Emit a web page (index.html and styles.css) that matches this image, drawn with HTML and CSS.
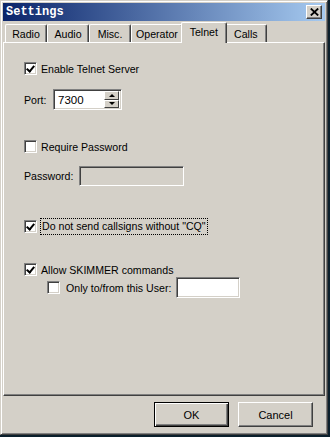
FILE: index.html
```html
<!DOCTYPE html>
<html lang="en">
<head>
    <meta charset="UTF-8">
    <title>Settings</title>
    <link rel="stylesheet" href="styles.css">
</head>
<body>
    <div class="window">
        <div class="titlebar">
            <span class="title">Settings</span>
            <div class="close-btn">
                <svg width="9" height="8" viewBox="0 0 9 8"><path d="M0.8 0.5 L8.2 7.5 M8.2 0.5 L0.8 7.5" stroke="#000" stroke-width="1.8"/></svg>
            </div>
        </div>

        <div class="tabs">
            <div class="tab">Radio</div>
            <div class="tab">Audio</div>
            <div class="tab">Misc.</div>
            <div class="tab">Operator</div>
            <div class="tab active">Telnet</div>
            <div class="tab">Calls</div>
        </div>

        <div class="panel">
            <div class="check-row row-enable">
                <span class="checkbox checked"></span>
                <span class="check-label">Enable Telnet Server</span>
            </div>

            <div class="field-row row-port">
                <span class="field-label port-label">Port:</span>
                <div class="spinner">
                    <span class="spinner-value">7300</span>
                    <div class="spin-buttons">
                        <div class="spin-btn"><span class="arrow-up"></span></div>
                        <div class="spin-btn"><span class="arrow-down"></span></div>
                    </div>
                </div>
            </div>

            <div class="check-row row-require">
                <span class="checkbox"></span>
                <span class="check-label">Require Password</span>
            </div>

            <div class="field-row row-password">
                <span class="field-label pass-label">Password:</span>
                <div class="textbox disabled pass-box"></div>
            </div>

            <div class="check-row row-cq">
                <span class="checkbox checked"></span>
                <span class="check-label focused">Do not send callsigns without "CQ"</span>
            </div>

            <div class="check-row row-skimmer">
                <span class="checkbox checked"></span>
                <span class="check-label">Allow SKIMMER commands</span>
            </div>

            <div class="field-row row-user">
                <span class="checkbox"></span>
                <span class="check-label user-label">Only to/from this User:</span>
                <div class="textbox user-box"></div>
            </div>
        </div>

        <div class="footer">
            <button class="btn default">OK</button>
            <button class="btn">Cancel</button>
        </div>
    </div>
</body>
</html>
```

FILE: styles.css
```css
body {
    margin: 0;
    padding: 0;
    background: #0b1f2c;
    font-family: 'Liberation Sans', Arial, sans-serif;
    font-size: 10.6px;
    color: #000;
}
.window {
    width: 328px;
    height: 435px;
    box-sizing: border-box;
    background: #d4d0c8;
    border-top: 1px solid #d4d0c8;
    border-left: 1px solid #d4d0c8;
    border-right: 1px solid #404040;
    border-bottom: 1px solid #404040;
    box-shadow: inset 1px 1px 0 #fff, inset -1px -1px 0 #808080;
    padding: 2px;
    display: flex;
    flex-direction: column;
}
.titlebar {
    height: 18px;
    background: linear-gradient(to right, #0a246a, #a6caf0);
    display: flex;
    justify-content: space-between;
    align-items: center;
    padding: 0 3px 0 3px;
}
.title {
    color: #fff;
    font-family: 'Liberation Mono', 'Courier New', monospace;
    font-weight: bold;
    font-size: 12px;
}
.close-btn {
    width: 16px;
    height: 14px;
    box-sizing: border-box;
    background: #d4d0c8;
    border-top: 1px solid #fff;
    border-left: 1px solid #fff;
    border-right: 1px solid #404040;
    border-bottom: 1px solid #404040;
    box-shadow: inset -1px -1px 0 #808080;
    display: flex;
    justify-content: center;
    align-items: center;
}
.tabs {
    display: flex;
    align-items: flex-end;
    height: 19px;
    margin-top: 2px;
    padding-left: 2px;
    position: relative;
    z-index: 1;
}
.tab {
    height: 18px;
    min-width: 42px;
    box-sizing: border-box;
    padding: 0 4px;
    display: flex;
    justify-content: center;
    align-items: center;
    background: #d4d0c8;
    border-top: 1px solid #fff;
    border-left: 1px solid #fff;
    border-right: 1px solid #404040;
    border-radius: 2px 2px 0 0;
    box-shadow: inset -1px 0 0 #808080;
}
.tab.active {
    height: 21px;
    margin: 0 -2px -1px -2px;
    min-width: 46px;
    padding-bottom: 2px;
    position: relative;
    z-index: 2;
}
.panel {
    height: 354px;
    box-sizing: border-box;
    border-top: 1px solid #fff;
    border-left: 1px solid #fff;
    border-right: 1px solid #404040;
    border-bottom: 1px solid #404040;
    box-shadow: inset -1px -1px 0 #808080;
    padding-left: 20px;
    display: flex;
    flex-direction: column;
}
.check-row, .field-row {
    display: flex;
    align-items: center;
}
.check-row {
    height: 13px;
}
.row-enable { margin-top: 19px; }
.row-port { margin-top: 14px; height: 21px; }
.row-require { margin-top: 30px; }
.row-password { margin-top: 13px; height: 20px; }
.row-cq { margin-top: 34px; }
.row-skimmer { margin-top: 30px; }
.row-user { margin-top: 1px; height: 21px; padding-left: 23px; }

.checkbox {
    width: 13px;
    height: 13px;
    box-sizing: border-box;
    background: #fff;
    border-top: 1px solid #808080;
    border-left: 1px solid #808080;
    border-right: 1px solid #fff;
    border-bottom: 1px solid #fff;
    box-shadow: inset 1px 1px 0 #404040, inset -1px -1px 0 #d4d0c8;
    flex-shrink: 0;
    position: relative;
}
.checkbox.checked::after {
    content: "";
    position: absolute;
    left: 3px;
    top: 1px;
    width: 3px;
    height: 6px;
    border-right: 2px solid #000;
    border-bottom: 2px solid #000;
    transform: rotate(40deg);
}
.check-label {
    margin-left: 4px;
    white-space: nowrap;
}
.check-label.focused {
    margin-left: 3px;
    padding: 1px 1px 2px 1px;
    border: 1px dotted #000;
}
.user-label {
    margin-left: 6px;
}
.field-label {
    white-space: nowrap;
}
.port-label { width: 29px; }
.pass-label { width: 55px; }

.spinner, .textbox {
    box-sizing: border-box;
    border-top: 1px solid #808080;
    border-left: 1px solid #808080;
    border-right: 1px solid #fff;
    border-bottom: 1px solid #fff;
    box-shadow: inset 1px 1px 0 #404040, inset -1px -1px 0 #d4d0c8;
    background: #fff;
}
.spinner {
    width: 69px;
    height: 21px;
    display: flex;
    align-items: center;
    justify-content: space-between;
    padding: 2px;
}
.spinner-value {
    padding-left: 2px;
    font-size: 11.5px;
}
.spin-buttons {
    display: flex;
    flex-direction: column;
    width: 15px;
    height: 17px;
}
.spin-btn {
    flex: 1;
    box-sizing: border-box;
    background: #d4d0c8;
    border-top: 1px solid #fff;
    border-left: 1px solid #fff;
    border-right: 1px solid #404040;
    border-bottom: 1px solid #404040;
    display: flex;
    justify-content: center;
    align-items: center;
}
.arrow-up, .arrow-down {
    width: 0;
    height: 0;
    border-left: 3px solid transparent;
    border-right: 3px solid transparent;
}
.arrow-up { border-bottom: 3px solid #000; }
.arrow-down { border-top: 3px solid #000; }

.textbox.disabled {
    background: #d4d0c8;
}
.pass-box {
    width: 105px;
    height: 20px;
}
.user-box {
    width: 64px;
    height: 21px;
    margin-left: 5px;
}

.footer {
    display: flex;
    justify-content: flex-end;
    gap: 9px;
    padding: 6px 12px 0 0;
}
.btn {
    width: 75px;
    height: 25px;
    font-family: 'Liberation Sans', Arial, sans-serif;
    font-size: 11px;
    color: #000;
    background: #d4d0c8;
    border-top: 1px solid #fff;
    border-left: 1px solid #fff;
    border-right: 1px solid #404040;
    border-bottom: 1px solid #404040;
    box-shadow: inset -1px -1px 0 #808080;
    padding: 0;
}
.btn.default {
    border: 1px solid #000;
    box-shadow: inset 1px 1px 0 #fff, inset -1px -1px 0 #404040, inset -2px -2px 0 #808080;
}
```
